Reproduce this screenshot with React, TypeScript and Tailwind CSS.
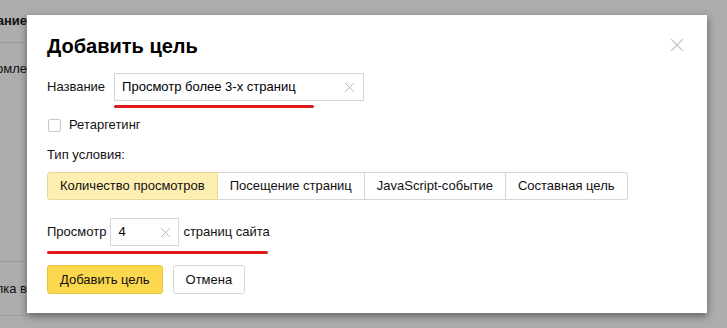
import { X } from "lucide-react";

const font = { fontFamily: '"Liberation Sans", Arial, sans-serif' };

function ClearIcon() {
  return (
    <svg width="11" height="11" viewBox="0 0 11 11" className="shrink-0">
      <path d="M1 1 L10 10 M10 1 L1 10" stroke="#b8b8b8" strokeWidth="1" />
    </svg>
  );
}

const tabs = ["Количество просмотров", "Посещение страниц", "JavaScript-событие", "Составная цель"];

export default function App() {
  return (
    <div className="relative w-[727px] h-[328px] overflow-hidden bg-[#adadad] text-[13px] text-[#111]" style={font}>
      {/* page behind the overlay */}
      <div className="w-[27px]">
        <div className="h-[43px] flex items-center justify-end font-bold border-b border-[#9b9b9b] whitespace-nowrap">
          <span>ание</span>
        </div>
        <div className="h-[52px] flex items-center justify-end whitespace-nowrap">
          <span>омле</span>
        </div>
        <div className="h-[167px] border-b border-[#9b9b9b]" />
        <div className="h-[54px] flex items-center justify-end whitespace-nowrap border-b border-[#9b9b9b]">
          <span>лка в</span>
        </div>
      </div>

      {/* modal */}
      <div className="absolute left-[27px] top-[15px] w-[680px] h-[298px] bg-white shadow-[0_3px_8px_rgba(0,0,0,0.45)] px-[20px] pt-[19px]">
        <button className="absolute right-[19px] top-[19px] text-[#c4c4c4]">
          <X size={22} strokeWidth={1.2} />
        </button>
        <h1 className="text-[20px] font-bold leading-[24px] text-black">Добавить цель</h1>

        <div className="mt-[15px] flex items-center gap-[9px]">
          <span>Название</span>
          <div className="relative">
            <div className="w-[250px] h-[28px] border border-[#d6d6d6] flex items-center justify-between pl-[7px] pr-[8px]">
              <span className="text-black">Просмотр более 3-х страниц</span>
              <ClearIcon />
            </div>
            <div className="absolute left-0 top-[32px] w-[200px] h-[3px] rounded-full bg-[#e0191c]" />
          </div>
        </div>

        <label className="mt-[14px] flex items-center gap-[8px] h-[20px]">
          <span className="w-[13px] h-[13px] border border-[#c8c8c8] rounded-[2px] bg-white ml-[1px]" />
          <span>Ретаргетинг</span>
        </label>

        <div className="mt-[10px] h-[20px] flex items-center">Тип условия:</div>

        <div className="mt-[7px] flex">
          {tabs.map((t, i) => (
            <div
              key={t}
              className={
                i === 0
                  ? "h-[28px] px-[12px] flex items-center bg-[#fdefb2] border border-[#e8d99a] rounded-l-[3px]"
                  : "h-[28px] px-[12px] flex items-center bg-white border border-l-0 border-[#d6d6d6] last:rounded-r-[3px]"
              }
            >
              {t}
            </div>
          ))}
        </div>

        <div className="relative mt-[18px] inline-flex items-center gap-[4px]">
          <span>Просмотр</span>
          <div className="w-[69px] h-[28px] border border-[#d6d6d6] flex items-center justify-between pl-[7px] pr-[7px]">
            <span className="text-black">4</span>
            <ClearIcon />
          </div>
          <span>страниц сайта</span>
          <div className="absolute left-0 top-[33px] w-[221px] h-[3px] rounded-full bg-[#e0191c]" />
        </div>

        <div className="mt-[19px] flex gap-[10px]">
          <button className="h-[29px] px-[12px] bg-[#fbd84e] border border-[#e3c23e] rounded-[3px] text-[#111]">
            Добавить цель
          </button>
          <button className="h-[29px] px-[12px] bg-white border border-[#d6d6d6] rounded-[3px] text-[#111]">
            Отмена
          </button>
        </div>
      </div>
    </div>
  );
}
